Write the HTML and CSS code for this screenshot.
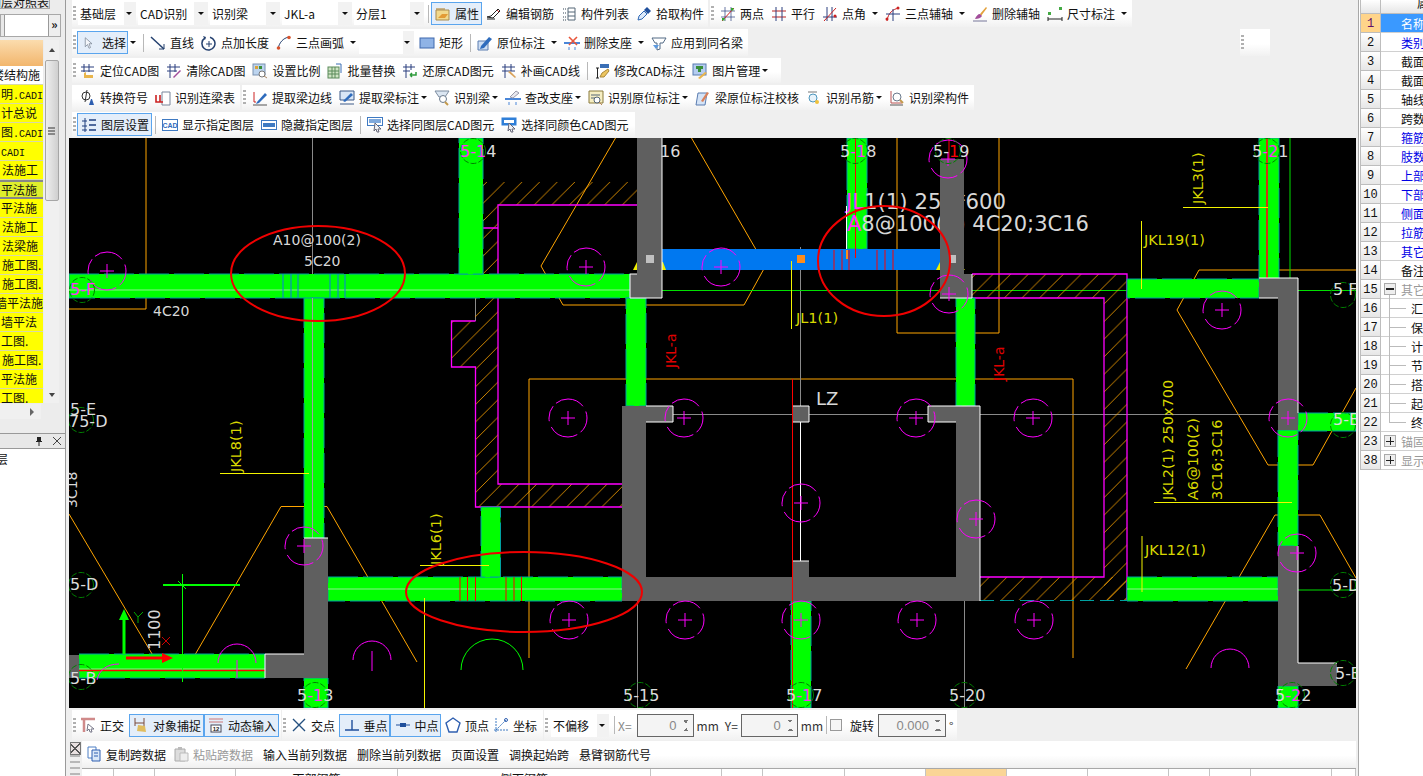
FILE: index.html
```html
<!DOCTYPE html>
<html lang="zh-CN">
<head>
    <meta charset="UTF-8">
    <title>CAD识别 - 识别梁</title>
    <link rel="stylesheet" href="styles.css">
</head>
<body>
<div class="app">

    <!-- 左侧 图层对照表 -->
    <aside class="left">
        <div class="left-tab">图层对照表</div>
        <div class="left-strip"><span class="strip-btn"></span><span class="strip-more">»</span></div>
        <div class="left-list">
            <div class="list-rows">
                <div class="list-head"></div>
                <div class="li white cut-a">楼结构施</div>
                <div class="li">明<span class="m">.CADI</span></div>
                <div class="li">计总说</div>
                <div class="li">图<span class="m">.CADI</span></div>
                <div class="li cut-b"><span class="m">.CADI</span></div>
                <div class="li in">法施工</div>
                <div class="li sel">平法施</div>
                <div class="li">平法施</div>
                <div class="li in">法施工</div>
                <div class="li in">法梁施</div>
                <div class="li in">施工图.</div>
                <div class="li in">施工图.</div>
                <div class="li cut-c">墙平法施</div>
                <div class="li">墙平法</div>
                <div class="li">工图.</div>
                <div class="li in">施工图.</div>
                <div class="li">平法施</div>
                <div class="li">工图.</div>
            </div>
            <div class="vscroll">
                <span class="sc-up"></span>
                <span class="sc-thumb"><i></i><i></i><i></i></span>
                <span class="sc-down"></span>
            </div>
        </div>
        <div class="hscroll"><span class="sc-right"></span></div>
        <div class="panel-head">
            <svg class="pin" viewBox="0 0 10 10"><path d="M3 1h4v4h1v1H5.500v4h-1V6H2V5h1z" fill="#222"/></svg>
            <svg class="pin" viewBox="0 0 10 10"><path d="M1 1l8 8M9 1l-8 8" stroke="#444" fill="none"/></svg>
        </div>
        <div class="panel-body">层</div>
    </aside>

    <main class="center">
        <!-- 工具栏 -->
        <div class="tools">
            <div class="row">
                <div class="bar w-a">
                    <span class="grip"></span>
                    <span class="combo"><b>基础层</b><i class="arr"></i></span>
                    <span class="combo"><b>CAD识别</b><i class="arr"></i></span>
                    <span class="combo"><b>识别梁</b><i class="arr"></i></span>
                    <span class="combo"><b>JKL-a</b><i class="arr"></i></span>
                    <span class="combo"><b>分层1</b><i class="arr"></i></span>
                    <span class="sep"></span>
                    <span class="tool on prop">
                        <svg class="ic" viewBox="0 0 16 16"><path d="M1 2h9v2H1z" fill="#c9b48a"/><path d="M1 4h13v10H1z" fill="#f2d98c" stroke="#a98b4e"/><path d="M3 12l4-4h6l-3 4z" fill="#e39b35"/></svg>属性
                    </span>
                    <span class="tool">
                        <svg class="ic" viewBox="0 0 16 16"><path d="M1 11l4-1 7-7 2 2-7 7z" fill="#fff" stroke="#222"/><path d="M11 4l2 2" stroke="#c33"/><path d="M1 13h8" stroke="#222"/></svg>编辑钢筋
                    </span>
                    <span class="tool">
                        <svg class="ic" viewBox="0 0 16 16"><path d="M7 2h7v12H7z" fill="#fff" stroke="#567"/><path d="M7 6h7M7 10h7" stroke="#567"/><path d="M2 3h3M2 7h3M2 11h3M2 14h3" stroke="#345" stroke-dasharray="1 1"/></svg>构件列表
                    </span>
                    <span class="tool">
                        <svg class="ic" viewBox="0 0 16 16"><path d="M2 14l1-4 5-5 3 3-5 5z" fill="#dbe9fa" stroke="#2f68b5"/><path d="M8 4l3-3 4 4-3 3z" fill="#1f4f9c"/></svg>拾取构件
                    </span>
                </div>
                <div class="bar w-b">
                    <span class="grip"></span>
                    <span class="tool">
                        <svg class="ic" viewBox="0 0 16 16"><path d="M1 5h14M1 11h14M5 1v14M11 1v14" stroke="#2b3f7e" fill="none" opacity=".7"/><path d="M2 15L14 2" stroke="#c22"/><rect x="2" y="12" width="2.500" height="2.500" fill="#3a3"/><rect x="11" y="2" width="2.500" height="2.500" fill="#3a3"/></svg>两点
                    </span>
                    <span class="tool">
                        <svg class="ic" viewBox="0 0 16 16"><path d="M1 5h14M1 11h14" stroke="#b22" /><path d="M5 1v14M11 1v14" stroke="#2b3f7e"/></svg>平行
                    </span>
                    <span class="tool">
                        <svg class="ic" viewBox="0 0 16 16"><path d="M1 11h14M5 1v14M10 1v14" stroke="#2b3f7e"/><path d="M2 15L14 2" stroke="#c22"/><circle cx="13" cy="10" r="1.500" fill="#c22"/></svg>点角<i class="arr"></i>
                    </span>
                    <span class="tool">
                        <svg class="ic" viewBox="0 0 16 16"><path d="M2 15C3 7 8 3 14 2" stroke="#c22" fill="none"/><path d="M1 8h14M8 3v12" stroke="#2b3f7e"/><circle cx="2" cy="13" r="1.500" fill="#c22"/><circle cx="13" cy="2" r="1.500" fill="#c22"/></svg>三点辅轴<i class="arr"></i>
                    </span>
                    <span class="tool">
                        <svg class="ic" viewBox="0 0 16 16"><path d="M8 8l6-7 1 1-6 8z" fill="#e3a13c"/><path d="M3 13c1-3 3-5 5-5l2 2c-1 2-4 3-7 3z" fill="#a24d9a"/><path d="M1 15h14" stroke="#779"/></svg>删除辅轴
                    </span>
                    <span class="tool">
                        <svg class="ic" viewBox="0 0 16 16"><rect x="1" y="6" width="3" height="3" fill="#4a4"/><rect x="12" y="1" width="3" height="3" fill="#4a4"/><path d="M1 11v4M15 11v4M1 13h14" stroke="#222"/></svg>尺寸标注<i class="arr"></i>
                    </span>
                </div>
            </div>

            <div class="row">
                <div class="bar w-c">
                    <span class="grip"></span>
                    <span class="tool on pick">
                        <svg class="ic sm" viewBox="0 0 16 16"><path d="M3 1l9 8H8l2 5-2 1-2-5-3 3z" fill="#f4f7fb" stroke="#7a8494"/></svg>选择
                    </span>
                    <i class="arr out"></i>
                    <span class="sep"></span>
                    <span class="tool">
                        <svg class="ic" viewBox="0 0 16 16"><path d="M1 2l13 12" stroke="#24406f" stroke-width="1.500"/><path d="M14 9v5H9" stroke="#24406f" fill="none"/></svg>直线
                    </span>
                    <span class="tool">
                        <svg class="ic" viewBox="0 0 16 16"><path d="M4 3a6.500 6.500 0 1 0 5-.8" stroke="#24406f" stroke-width="1.500" fill="none"/><path d="M2 1l3 1-1 3z" fill="#24406f"/><path d="M5 9h6M8 6v6" stroke="#24406f"/></svg>点加长度
                    </span>
                    <span class="tool">
                        <svg class="ic" viewBox="0 0 16 16"><path d="M2 14C3 8 7 3 13 2" stroke="#24406f" fill="none"/><circle cx="2.500" cy="13" r="1.800" fill="#d9532c"/><circle cx="13" cy="2.500" r="1.800" fill="#d9532c"/></svg>三点画弧<i class="arr"></i>
                    </span>
                    <span class="combo narrow"><b></b><i class="arr"></i></span>
                    <span class="tool rect-tool">
                        <svg class="ic" viewBox="0 0 16 16"><rect x="1" y="3" width="14" height="10" fill="#8fb3e6" stroke="#3f68ad"/></svg>矩形
                    </span>
                    <span class="sep"></span>
                    <span class="tool">
                        <svg class="ic" viewBox="0 0 16 16"><path d="M1 6h10v9H1z" fill="#cfdff4" stroke="#5a7cb0"/><path d="M4 11l8-9 3 2-8 9-4 1z" fill="#2f6cbd"/></svg>原位标注<i class="arr"></i>
                    </span>
                    <span class="tool">
                        <svg class="ic" viewBox="0 0 16 16"><path d="M0 8h16" stroke="#4a86d8" stroke-width="2"/><path d="M5 12v3M11 12v3" stroke="#4a86d8"/><path d="M5 2l8 8M13 2l-8 8" stroke="#e8553a" stroke-width="1.600"/></svg>删除支座<i class="arr"></i>
                    </span>
                    <span class="tool">
                        <svg class="ic" viewBox="0 0 16 16"><path d="M1 3h14l-3 5H9v6l-3 1V8H4z" fill="#fff" stroke="#536a85"/><path d="M2 10l3 4 3-4z" fill="#5c9ae0"/></svg>应用到同名梁
                    </span>
                </div>
                <div class="bar w-d"><span class="grip"></span></div>
            </div>

            <div class="row">
                <div class="bar w-e">
                    <span class="grip"></span>
                    <span class="tool">
                        <svg class="ic" viewBox="0 0 16 16"><path d="M4 1v8M9 1v8M1 4h13M1 8h13" stroke="#2b3f7e"/><path d="M4 15v-5l2-1v3h7v3z" fill="#e9b54c"/></svg>定位CAD图
                    </span>
                    <span class="tool">
                        <svg class="ic" viewBox="0 0 16 16"><path d="M4 1v14M9 1v8M1 4h13M1 8h10" stroke="#2b3f7e"/><path d="M7 14l7-7 1 1-7 7z" fill="#a24d9a"/></svg>清除CAD图
                    </span>
                    <span class="tool">
                        <svg class="ic" viewBox="0 0 16 16"><rect x="1" y="1" width="12" height="11" fill="#bcd4ef" stroke="#7a92b0"/><rect x="3" y="3" width="3" height="3" fill="#d9a33c"/><rect x="7" y="3" width="3" height="3" fill="#3a8f3a"/><circle cx="10" cy="11" r="3" fill="#fff" stroke="#777"/><path d="M12 13l3 2" stroke="#a86"/></svg>设置比例
                    </span>
                    <span class="tool">
                        <svg class="ic" viewBox="0 0 16 16"><rect x="1" y="4" width="11" height="11" fill="#cfe4c4" stroke="#5a8a5a"/><path d="M1 8h11M1 11h11M5 4v11M8 4v11" stroke="#5a8a5a"/><path d="M9 1h5v9" stroke="#3a6fb5" fill="none"/></svg>批量替换
                    </span>
                    <span class="tool">
                        <svg class="ic" viewBox="0 0 16 16"><path d="M4 1v14M9 1v6M1 4h12M1 8h7" stroke="#2b3f7e"/><path d="M8 12h6v-3M8 12l2-2M8 12l2 2" stroke="#2d9a3a" stroke-width="1.500" fill="none"/></svg>还原CAD图元
                    </span>
                    <span class="tool">
                        <svg class="ic" viewBox="0 0 16 16"><path d="M4 1v14M10 1v7M1 4h13M1 8h13" stroke="#2b3f7e"/><path d="M7 9l2-1 6 6-1 1z" fill="#d9a35c"/></svg>补画CAD线
                    </span>
                    <span class="sep"></span>
                    <span class="tool">
                        <svg class="ic" viewBox="0 0 16 16"><path d="M2 5h3M2 15h3M3.500 5v10" stroke="#222"/><path d="M6 14l2-4 6-4 1 2-5 6z" fill="#ecc55f" stroke="#a8863a"/><path d="M6 1h9v4H6z" fill="#3a6fb5"/></svg>修改CAD标注
                    </span>
                    <span class="tool">
                        <svg class="ic" viewBox="0 0 16 16"><rect x="1" y="1" width="13" height="11" fill="#b5cdf0" stroke="#5a7cb0"/><path d="M4 3h7v3H9v3H6V6H4z" fill="#3a8f3a"/><path d="M6 15l7-6 2 1-7 6z" fill="#e9b54c"/></svg>图片管理<i class="arr tight"></i>
                    </span>
                </div>
            </div>

            <div class="row">
                <div class="bar w-f">
                    <span class="tool first">
                        <svg class="ic" viewBox="0 0 16 16"><circle cx="6" cy="6" r="4" fill="none" stroke="#333"/><path d="M7 0L5 12" stroke="#333"/><path d="M9 15l2-6h1l2 6z" fill="#2f5fb0"/></svg>转换符号
                    </span>
                    <span class="tool">
                        <svg class="ic" viewBox="0 0 16 16"><path d="M7 2h8v13H7z" fill="#fff" stroke="#78859a"/><path d="M1 5v7h4M5 5v7h3" stroke="#c22" stroke-width="1.600" fill="none"/></svg>识别连梁表
                    </span>
                </div>
                <div class="bar w-g">
                    <span class="grip"></span>
                    <span class="tool">
                        <svg class="ic" viewBox="0 0 16 16"><path d="M1 15h14" stroke="#555"/><path d="M2 2v10h2" stroke="#c22" fill="none"/><path d="M5 12l8-9 2 2-8 8-3 1z" fill="#2f6cbd"/></svg>提取梁边线
                    </span>
                    <span class="tool">
                        <svg class="ic" viewBox="0 0 16 16"><path d="M1 1h14v9H1z" fill="#d8e6f7" stroke="#3c5a88"/><path d="M1 14h14" stroke="#3c5a88"/><path d="M4 11l8-8 2 2-8 7z" fill="#2f6cbd"/></svg>提取梁标注<i class="arr tight"></i>
                    </span>
                    <span class="tool">
                        <svg class="ic" viewBox="0 0 16 16"><path d="M1 1h14l-4 6H5z" fill="#dbe6f2" stroke="#7d8ca0"/><circle cx="9" cy="9" r="3.500" fill="#fff" stroke="#6a7a8d"/><path d="M11 12l3 3" stroke="#c49a4c" stroke-width="2"/></svg>识别梁<i class="arr tight"></i>
                    </span>
                    <span class="tool">
                        <svg class="ic" viewBox="0 0 16 16"><path d="M0 9h16" stroke="#4a86d8" stroke-width="2"/><path d="M4 12v3M11 12v3" stroke="#4a86d8"/><path d="M5 7l6-6 3 2-6 5z" fill="#e8e8ee" stroke="#99a"/></svg>查改支座<i class="arr tight"></i>
                    </span>
                    <span class="tool">
                        <svg class="ic" viewBox="0 0 16 16"><path d="M1 1h14v12H1z" fill="#f6eec2" stroke="#8a7a3c"/><path d="M3 5h9M3 8h5" stroke="#567"/><circle cx="9" cy="10" r="3" fill="#fff" stroke="#567"/><path d="M11 12l3 3" stroke="#b85"/></svg>识别原位标注<i class="arr tight"></i>
                    </span>
                    <span class="tool">
                        <svg class="ic" viewBox="0 0 16 16"><path d="M3 3h9l-2 12H1z" fill="#d5e4f7" stroke="#5a7cb0"/><path d="M6 11l6-9 2 1-6 9z" fill="#d9825c"/></svg>梁原位标注校核
                    </span>
                    <span class="tool tight-ic">
                        <svg class="ic" viewBox="0 0 16 16"><path d="M2 2h9" stroke="#777"/><circle cx="7" cy="8" r="4" fill="#e8f3fb" stroke="#4e97bd"/><circle cx="11" cy="12" r="2" fill="#f0c23c"/></svg>识别吊筋<i class="arr tight"></i>
                    </span>
                    <span class="tool">
                        <svg class="ic" viewBox="0 0 16 16"><path d="M2 1v12h11" stroke="#b55" fill="none"/><circle cx="8" cy="7" r="4" fill="#fff" stroke="#6a7a8d"/><path d="M11 10l3 3" stroke="#c49a4c" stroke-width="2"/><path d="M1 15h13" stroke="#555"/></svg>识别梁构件
                    </span>
                </div>
            </div>

            <div class="row">
                <div class="bar w-h">
                    <span class="grip"></span>
                    <span class="tool on layer">
                        <svg class="ic" viewBox="0 0 16 16"><path d="M4 1v14M1 4h5M1 9h5M1 13h5" stroke="#1f3f7f"/><path d="M8 3h7M8 8h7M8 13h7" stroke="#1f3f7f" stroke-width="1.400"/></svg>图层设置
                    </span>
                    <span class="sep"></span>
                    <span class="tool">
                        <svg class="ic" viewBox="0 0 16 16"><rect x=".5" y="2.500" width="15" height="11" fill="#fff" stroke="#3f7ac2"/><text x="8" y="11" class="ic-t">CAD</text></svg>显示指定图层
                    </span>
                    <span class="tool">
                        <svg class="ic" viewBox="0 0 16 16"><rect x=".5" y="3.500" width="15" height="9" fill="#fff" stroke="#3f7ac2"/><rect x="2" y="6" width="12" height="4" fill="#3f7ac2"/></svg>隐藏指定图层
                    </span>
                    <span class="sep"></span>
                    <span class="tool">
                        <svg class="ic" viewBox="0 0 16 16"><rect x=".5" y=".5" width="15" height="8" fill="#fff" stroke="#3f7ac2"/><rect x="2" y="2" width="12" height="4" fill="#7fa9dc"/><path d="M8 6l6 6h-3l1 3h-2l-1-3-2 2z" fill="#eef1f6" stroke="#667"/></svg>选择同图层CAD图元
                    </span>
                    <span class="tool">
                        <svg class="ic" viewBox="0 0 16 16"><rect x=".5" y=".5" width="15" height="8" fill="#2f7fd8"/><rect x="3" y="3" width="10" height="3" fill="#fff"/><path d="M8 6l6 6h-3l1 3h-2l-1-3-2 2z" fill="#eef1f6" stroke="#667"/></svg>选择同颜色CAD图元
                    </span>
                </div>
            </div>
        </div>

        <!-- 绘图区，坐标与屏幕一致 -->
        <svg class="canvas" viewBox="69 138 1287 570">
            <defs>
                <pattern id="hatch" width="17.600" height="17.600" patternUnits="userSpaceOnUse">
                    <path d="M0 17.600L17.600 0" stroke="#ffa500" stroke-width=".8" fill="none"/>
                </pattern>
                <g id="pile">
                    <circle r="19" fill="none" stroke="#f0f" stroke-dasharray="16 4 30 6"/>
                    <path d="M-7 0H7M0-7V7" stroke="#f0f" fill="none"/>
                </g>
                <circle id="ax" r="12.500" fill="none" stroke="#008000" stroke-dasharray="6 2"/>
            </defs>

            <!-- 细线 -->
            <g class="ln-orange">
                <path d="M69 309H146V138"/>
                <path d="M897 138V333H999V138"/>
                <path d="M529 658V379H1073V658"/>
                <path d="M615.500 138L541 266 563 305H744L765.500 266 691.500 138"/>
                <path d="M1356 270H1199L1177 310 1268 465H1313L1356 388"/>
                <path d="M1186 669L1275 515H1320L1356 578"/>
                <path d="M192 660L281 506.500H327L417 662"/>
                <path d="M69 514L161 669"/>
            </g>
            <g class="ln-gray">
                <path d="M312.500 138V304M475.500 138V321M800.500 247V406M646 414.500H1356M637.500 601V708M964.500 601V708"/>
            </g>
            <g class="ln-green">
                <path d="M662 290.500H1356M1290 138V278M1298 590H1356"/>
            </g>

            <!-- 斜线填充 -->
            <rect x="483" y="182" width="154" height="23" fill="url(#hatch)"/>
            <rect x="475" y="205" width="23" height="302" fill="url(#hatch)"/>
            <rect x="451" y="321" width="24" height="46" fill="url(#hatch)"/>
            <rect x="498" y="484" width="124" height="23" fill="url(#hatch)"/>
            <rect x="972" y="274" width="155" height="24" fill="url(#hatch)"/>
            <rect x="1104" y="298" width="23" height="302" fill="url(#hatch)"/>
            <rect x="980" y="577" width="147" height="23" fill="url(#hatch)"/>
            <g class="ln-mag">
                <path d="M637 205H498V484H622M475 228H498M475.500 321H451.500V367H475.500V507H622"/>
                <path d="M972 274H1127V600M972 298H1104V577H980"/>
            </g>
            <path d="M980 600.500H1127" stroke="#00a0a0" stroke-dasharray="14 6" fill="none"/>

            <!-- 梁 -->
            <g class="beam">
                <rect x="69" y="274" width="561" height="24"/>
                <rect x="304" y="298" width="20" height="240"/>
                <rect x="459" y="138" width="24" height="136"/>
                <rect x="626" y="298" width="20" height="108"/>
                <rect x="847" y="138" width="20" height="111"/>
                <rect x="956" y="298" width="19" height="108"/>
                <rect x="328" y="577" width="294" height="24"/>
                <rect x="481" y="507" width="19.500" height="70"/>
                <rect x="79" y="654" width="186" height="24"/>
                <rect x="304" y="678" width="24" height="30"/>
                <rect x="791" y="601" width="20" height="107"/>
                <rect x="1127" y="577" width="151" height="24"/>
                <rect x="1259" y="138" width="20" height="141"/>
                <rect x="1127" y="279" width="132" height="19"/>
                <rect x="1278" y="430" width="20" height="116"/>
                <rect x="1298" y="413" width="58" height="18"/>
                <rect x="1278" y="686" width="20" height="22"/>
            </g>
            <rect x="662" y="249" width="278" height="21" fill="#0078f0"/>
            <g fill="#ee0">
                <path d="M633 270l4-8 3 8zM660 262l3 0 3 8h-6zM936 270l4-8v8zM958 262l7 8h-7z"/>
            </g>
            <path d="M69 290H630M79 669H265M328 589H622M1127 589H1278" stroke="#90ee90" stroke-width="1" fill="none"/>
            <path d="M79 670.500H265" stroke="#f00" stroke-width="1.500" fill="none"/>

            <!-- 箍筋 -->
            <path d="M283 274v24M291 274v24M298 274v24M330 274v24M338 274v24M345 274v24" stroke="#0a7ae6" fill="none"/>
            <path d="M460 577v24M467.500 577v24M475.500 577v24M506 577v24M514 577v24M521.500 577v24" stroke="#f00" fill="none"/>
            <path d="M834 250v20M842 250v20M849 250v20M877 250v20M885 250v20M893 250v20" stroke="#f00" fill="none"/>
            <rect x="846" y="250" width="2" height="9" fill="#ff8c1a"/>
            <rect x="797" y="255" width="8" height="8" fill="#ff8c1a"/>
            <path d="M312.500 298V538M1267 138V278" stroke="#a0a0a0" fill="none"/>
            <path d="M1267 138V278" stroke="#f00" stroke-width="1.500" fill="none"/>
            <path d="M855.500 138V258" stroke="#f00" fill="none"/>

            <!-- 大字标注，被柱子压住 -->
            <text class="t-big" x="846" y="209" textLength="160" lengthAdjust="spacingAndGlyphs"><tspan class="on-g">JL</tspan>1(1) 250*600</text>
            <text class="t-big2" x="847" y="231" textLength="242" lengthAdjust="spacingAndGlyphs"><tspan class="on-g">A</tspan>8@100(2) 4C20;3C16</text>

            <!-- 柱 -->
            <g class="wall">
                <path d="M637 138H662V298H630V274H637Z"/>
                <path d="M940 159H964V274H972V298H940Z"/>
                <path d="M622 406H673V422H646V577H956V422H928V406H980V601H622Z"/>
                <rect x="792.500" y="406" width="16.500" height="16"/>
                <rect x="793" y="561" width="16" height="16"/>
                <path d="M304 538H328V678H265V654H304Z"/>
                <rect x="69" y="655" width="10" height="23"/>
                <path d="M1259 278H1298V430H1278V298H1259Z"/>
                <path d="M1278 546H1298V663H1337V686H1278Z"/>
            </g>
            <g class="ln-white">
                <path d="M662 138V298H630V274H637M972 274V298H940M646 406H673V422H646M928 422H956M928 422V406H980V601"/>
                <path d="M792 406H809V422H792M793 561H809"/>
                <path d="M304 538H328M265 654H304M265 654V678"/>
                <path d="M1259 298H1278M1259 278H1298V413M1298 546V663H1337M846.500 206V249"/>
                <path d="M800.500 422V561" stroke="#bbb"/>
            </g>
            <rect x="646" y="255" width="8" height="8" fill="#c0c0c0"/>
            <rect x="950" y="255" width="6" height="8" fill="#c0c0c0"/>
            <path d="M949 138V159" stroke="#f00" fill="none"/>
            <path d="M792.500 379V708" stroke="#f00" fill="none"/>

            <!-- 黄色引线 -->
            <g class="ln-yellow">
                <path d="M424.500 598V708M420 565.500H489M220 473.500H309M791.500 261V329M1141.500 221V289M1183 207.500H1268M1142 536V592M1154 502.500H1292"/>
            </g>

            <!-- 桩 -->
            <use href="#pile" x="107" y="271"/>
            <use href="#pile" x="586" y="267"/>
            <use href="#pile" x="721" y="267"/>
            <use href="#pile" x="949" y="294"/>
            <use href="#pile" x="948" y="159"/>
            <use href="#pile" x="1222" y="310"/>
            <use href="#pile" x="568" y="418"/>
            <use href="#pile" x="684" y="418"/>
            <use href="#pile" x="916" y="418"/>
            <use href="#pile" x="1033" y="418"/>
            <use href="#pile" x="1288" y="418"/>
            <use href="#pile" x="801" y="503"/>
            <use href="#pile" x="976" y="519"/>
            <use href="#pile" x="1297" y="553"/>
            <use href="#pile" x="304" y="546"/>
            <use href="#pile" x="569" y="620"/>
            <use href="#pile" x="685" y="620"/>
            <use href="#pile" x="801" y="620"/>
            <use href="#pile" x="917" y="620"/>
            <use href="#pile" x="1034" y="620"/>
            <path d="M218 663a19 19 0 0 1 38 0M237 660v18M353 660a19 19 0 0 1 38 0M372 651v20M1211 668a19 19 0 0 1 38 0M97 680c2-10 10-16 22-16" stroke="#f0f" fill="none"/>
            <path d="M461 670a31 31 0 0 1 62 0" stroke="#0f0" fill="none"/>

            <!-- 轴号圈 -->
            <use href="#ax" x="473" y="151"/>
            <use href="#ax" x="855" y="151"/>
            <use href="#ax" x="948" y="151"/>
            <use href="#ax" x="1267" y="151"/>
            <use href="#ax" x="1343" y="295"/>
            <use href="#ax" x="1343" y="425"/>
            <use href="#ax" x="1343" y="585"/>
            <use href="#ax" x="1343" y="673"/>
            <use href="#ax" x="640" y="695"/>
            <use href="#ax" x="801" y="695"/>
            <use href="#ax" x="964" y="695"/>
            <use href="#ax" x="1292" y="695"/>
            <use href="#ax" x="315" y="695"/>
            <use href="#ax" x="81" y="585"/>
            <use href="#ax" x="81" y="677"/>
            <use href="#ax" x="81" y="420"/>
            <use href="#ax" x="82" y="290"/>

            <!-- 文字 -->
            <g class="t-axis">
                <text x="460" y="157"><tspan class="on-g">5-1</tspan>4</text>
                <text x="660" y="157">16</text>
                <text x="840" y="157">5<tspan class="on-g">-1</tspan>8</text>
                <text x="933" y="157">5-<tspan class="on-r">1</tspan>9</text>
                <text x="1252" y="157">5<tspan class="on-g">-2</tspan>1</text>
                <text x="297" y="701">5<tspan class="on-g">-1</tspan>3</text>
                <text x="623" y="701">5-15</text>
                <text x="786" y="701">5<tspan class="on-g">-1</tspan>7</text>
                <text x="949" y="701">5-20</text>
                <text x="1275" y="701">5<tspan class="on-g">-2</tspan>2</text>
                <text x="1333" y="295">5 F</text>
                <text x="1333" y="425">5-E</text>
                <text x="1332" y="591">5-D</text>
                <text x="1335" y="679">5-B</text>
                <text x="70" y="295" class="on-g">5-F</text>
                <text x="70" y="590">5-D</text>
                <text x="70" y="684">5-B</text>
                <text x="70" y="415">5-E</text>
                <text x="69" y="427">75-D</text>
            </g>
            <g class="t-white">
                <text x="273" y="245">A10@100(2)</text>
                <text x="304" y="266">5C20</text>
                <text x="153" y="316">4C20</text>
                <text x="816" y="405" class="t-lz">LZ</text>
                <text transform="translate(77 508) rotate(-90)">3C18</text>
                <text transform="translate(160 650) rotate(-90)" class="t-1100">1100</text>
            </g>
            <g class="t-yellow">
                <text transform="translate(241 472) rotate(-90)">JKL8(1)</text>
                <text transform="translate(441 565) rotate(-90)">JKL6(1)</text>
                <text transform="translate(1203 204) rotate(-90)">JKL3(1)</text>
                <text transform="translate(1173 500) rotate(-90)">JKL2(1) 250x700</text>
                <text transform="translate(1198 500) rotate(-90)">A6@100(2)</text>
                <text transform="translate(1222 500) rotate(-90)">3C16;3C16</text>
                <text x="1144" y="245">JKL19(1)</text>
                <text x="1145" y="555">JKL12(1)</text>
                <text x="796" y="323">JL1(1)</text>
            </g>
            <g class="t-red">
                <text transform="translate(676 368) rotate(-90)">JKL-a</text>
                <text transform="translate(1004 381) rotate(-90)">JKL-a</text>
            </g>

            <!-- 坐标轴 -->
            <path d="M124 654V616" stroke="#0f0" stroke-width="3" fill="none"/>
            <path d="M124 609l-5 11h10z" fill="#0f0"/>
            <path d="M126 658H163" stroke="#f00" stroke-width="3" fill="none"/>
            <path d="M173 658l-11-5v10z" fill="#f00"/>
            <path d="M134 612l4 5 5-5M138 617v6" stroke="#0a0" fill="none"/>
            <path d="M162 637l8 8M170 637l-8 8" stroke="#c00" fill="none"/>
            <path d="M163 585H240" stroke="#0f0" stroke-width="2" fill="none"/>
            <path d="M182.500 574V682M178 581l8 8" stroke="#0f0" fill="none"/>

            <!-- 红圈 -->
            <g class="ring">
                <ellipse cx="318" cy="273.500" rx="87" ry="47.500"/>
                <ellipse cx="884" cy="261" rx="66" ry="55"/>
                <ellipse cx="524" cy="592" rx="118" ry="40"/>
            </g>
        </svg>

        <!-- 状态栏 -->
        <div class="status">
            <div class="bar s-a">
                <span class="grip"></span>
                <span class="tool">
                    <svg class="ic" viewBox="0 0 16 16"><path d="M1 2h14M4 2v13" stroke="#d08a8a" stroke-width="2.500"/><path d="M8 7l6 5h-3l1 3-2 0-1-3-2 2z" fill="#fff" stroke="#778"/></svg>正交
                </span>
                <span class="tool on snap">
                    <svg class="ic" viewBox="0 0 16 16"><path d="M2 1v8M11 1v8" stroke="#7a4a3a"/><path d="M2 6h9" stroke="#7a4a3a"/><path d="M4 14l1-6 7 1 1 6z" fill="#e0bd5f"/></svg>对象捕捉
                </span>
                <span class="tool on snap">
                    <svg class="ic" viewBox="0 0 16 16"><path d="M1 2h14M1 5h14" stroke="#c77"/><rect x="3" y="8" width="10" height="7" fill="#fff" stroke="#445"/><text x="8" y="14" class="ic-t dark">12</text></svg>动态输入
                </span>
            </div>
            <div class="bar s-b">
                <span class="grip"></span>
                <span class="tool">
                    <svg class="ic" viewBox="0 0 16 16"><path d="M2 2l12 12M14 2L2 14" stroke="#24507f" stroke-width="1.400"/></svg>交点
                </span>
                <span class="tool on foot">
                    <svg class="ic" viewBox="0 0 16 16"><path d="M1 13h14M8 3v10" stroke="#1f4f9c" stroke-width="1.400"/></svg>垂点
                </span>
                <span class="tool on foot">
                    <svg class="ic" viewBox="0 0 16 16"><path d="M1 8h14" stroke="#1f4f9c"/><rect x="5" y="6" width="6" height="4" fill="#1f4f9c"/></svg>中点
                </span>
                <span class="tool">
                    <svg class="ic" viewBox="0 0 16 16"><path d="M8 1l7 5-3 9H4L1 6z" fill="#fff" stroke="#2f5fb0" stroke-width="1.400"/></svg>顶点
                </span>
                <span class="tool">
                    <svg class="ic" viewBox="0 0 16 16"><path d="M3 1v14M1 13h14M3 13L13 3" stroke="#3f7ac2" stroke-dasharray="2 1"/><circle cx="13" cy="3" r="1.500" fill="none" stroke="#2f5fb0"/></svg>坐标
                </span>
            </div>
            <div class="bar s-c">
                <span class="grip"></span>
                <span class="combo offset"><b>不偏移</b><i class="arr"></i></span>
                <span class="sep"></span>
                <span class="fld muted">X=</span>
                <span class="spin"><b>0</b><i></i></span>
                <span class="fld">mm</span>
                <span class="fld y-lab">Y=</span>
                <span class="spin"><b>0</b><i></i></span>
                <span class="fld">mm</span>
                <span class="sep"></span>
                <span class="check"></span>
                <span class="rot">旋转</span>
                <span class="spin wide"><b>0.000</b><i></i></span>
                <span class="fld">°</span>
            </div>
        </div>

        <!-- 梁平法表格 -->
        <div class="lower">
            <div class="lower-side">
                <span class="lower-close"></span>
                <span class="lower-grip"></span>
            </div>
            <div class="lower-main">
                <div class="bar lower-bar">
                    <span class="tool">
                        <svg class="ic" viewBox="0 0 16 16"><path d="M2 1h8v11H2z" fill="#fff" stroke="#4d7fc4"/><path d="M6 4h8v11H6z" fill="#dbe8f8" stroke="#2f5fb0"/><path d="M8 7h4M8 10h4" stroke="#2f5fb0"/></svg>复制跨数据
                    </span>
                    <span class="tool off">
                        <svg class="ic" viewBox="0 0 16 16"><path d="M2 3h10v12H2z" fill="#ddd" stroke="#aaa"/><path d="M5 1h4v3H5z" fill="#bbb"/><path d="M7 7h8v8H7z" fill="#eee" stroke="#bbb"/></svg>粘贴跨数据
                    </span>
                    <span class="tool txt">输入当前列数据</span>
                    <span class="tool txt">删除当前列数据</span>
                    <span class="tool txt">页面设置</span>
                    <span class="tool txt">调换起始跨</span>
                    <span class="tool txt">悬臂钢筋代号</span>
                </div>
                <div class="grid-head">
                    <span></span><span></span><span></span>
                    <span class="up">下部钢筋</span>
                    <span class="up">侧面钢筋</span>
                    <span></span><span></span><span></span><span></span>
                    <span class="hot"></span>
                    <span></span><span></span><span></span><span></span><span></span><span></span>
                </div>
            </div>
        </div>
    </main>

    <!-- 右侧 属性表 -->
    <aside class="right">
        <div class="p-head"><span class="num"></span><span class="val head">属性名称</span></div>
        <div class="p-row cur"><span class="num">1</span><span class="val">名称</span></div>
        <div class="p-row"><span class="num">2</span><span class="val blue">类别</span></div>
        <div class="p-row"><span class="num">3</span><span class="val">截面宽度</span></div>
        <div class="p-row"><span class="num">4</span><span class="val">截面高度</span></div>
        <div class="p-row"><span class="num">5</span><span class="val">轴线距离</span></div>
        <div class="p-row"><span class="num">6</span><span class="val">跨数量</span></div>
        <div class="p-row"><span class="num">7</span><span class="val blue">箍筋</span></div>
        <div class="p-row"><span class="num">8</span><span class="val blue">肢数</span></div>
        <div class="p-row"><span class="num">9</span><span class="val blue">上部通长</span></div>
        <div class="p-row"><span class="num">10</span><span class="val blue">下部通长</span></div>
        <div class="p-row"><span class="num">11</span><span class="val blue">侧面构造</span></div>
        <div class="p-row"><span class="num">12</span><span class="val blue">拉筋</span></div>
        <div class="p-row"><span class="num">13</span><span class="val blue">其它箍筋</span></div>
        <div class="p-row"><span class="num">14</span><span class="val">备注</span></div>
        <div class="p-row"><span class="num">15</span><span class="val gray"><i class="fold minus"></i>其它属性</span></div>
        <div class="p-row tree"><span class="num">16</span><span class="val sub">汇总信息</span></div>
        <div class="p-row tree"><span class="num">17</span><span class="val sub">保护层</span></div>
        <div class="p-row tree"><span class="num">18</span><span class="val sub">计算设置</span></div>
        <div class="p-row tree"><span class="num">19</span><span class="val sub">节点设置</span></div>
        <div class="p-row tree"><span class="num">20</span><span class="val sub">搭接设置</span></div>
        <div class="p-row tree"><span class="num">21</span><span class="val sub">起点顶标高</span></div>
        <div class="p-row tree end"><span class="num">22</span><span class="val sub">终点顶标高</span></div>
        <div class="p-row"><span class="num">23</span><span class="val gray"><i class="fold plus"></i>锚固搭接</span></div>
        <div class="p-row"><span class="num">38</span><span class="val gray"><i class="fold plus"></i>显示样式</span></div>
    </aside>
</div>
</body>
</html>
```

FILE: styles.css
```css
* {
    box-sizing: border-box;
}
html, body {
    margin: 0;
    height: 100%;
    overflow: hidden;
}
body {
    font-family: "Noto Sans CJK SC", "Liberation Sans", sans-serif;
    font-size: 12px;
    color: #111;
    background: #fff;
}
.app {
    display: flex;
    width: 1423px;
    height: 776px;
    overflow: hidden;
}

/* 左侧 */
.left {
    width: 66px;
    flex: none;
    display: flex;
    flex-direction: column;
    background: #ececec;
    border-right: 1px solid #9a9a9a;
    overflow: hidden;
}
.left-tab {
    height: 9px;
    width: 62px;
    margin-left: -12px;
    line-height: 4px;
    font-size: 12px;
    white-space: nowrap;
    overflow: hidden;
    background: #e6e6e6;
    border: 1px solid #aaa;
    border-top: none;
}
.left-strip {
    height: 23px;
    width: 61px;
    margin-top: 5px;
    display: flex;
    justify-content: space-between;
    background: #fff;
    border: 1px solid #a8a8a8;
}
.strip-btn {
    width: 4px;
    background: #e8e8e8;
    border-right: 1px solid #999;
}
.strip-more {
    width: 12px;
    text-align: center;
    font-weight: bold;
    line-height: 17px;
    background: #eee;
    border-left: 1px solid #999;
}
.left-list {
    height: 363px;
    width: 61px;
    margin-top: 3px;
    display: flex;
}
.list-rows {
    width: 43px;
    flex: none;
    overflow: hidden;
    background: #ffff00;
}
.list-head {
    height: 26px;
    background: linear-gradient(#fbdcae, #f2b66d);
}
.li {
    height: 19px;
    line-height: 18px;
    padding-left: 1px;
    white-space: nowrap;
    border-bottom: 1px solid #d8d8a8;
}
.li .m, .m {
    font-family: "Liberation Mono", monospace;
    font-size: 10px;
}
.li.white {
    background: #fff;
}
.li.in {
    padding-left: 2px;
}
.li.sel {
    background: #dfee2c;
    border-top: 2px solid #888;
    border-bottom: 2px solid #888;
    line-height: 15px;
}
.cut-a {
    margin-left: -9px;
}
.cut-b {
    margin-left: -6px;
}
.cut-c {
    margin-left: -6px;
}
.vscroll {
    width: 15px;
    margin-left: 1px;
    display: flex;
    flex-direction: column;
    align-items: center;
    background: #f0f0f0;
}
.sc-up, .sc-down {
    width: 0;
    height: 0;
    margin: 8px 0;
    border: 3px solid transparent;
}
.sc-up {
    border-bottom: 4px solid #444;
    border-top: none;
}
.sc-down {
    margin-top: auto;
    margin-bottom: 6px;
    border-top: 4px solid #444;
    border-bottom: none;
}
.sc-thumb {
    height: 141px;
    width: 14px;
    display: flex;
    flex-direction: column;
    align-items: center;
    justify-content: center;
    gap: 1px;
    background: linear-gradient(90deg, #eee, #cfcfcf);
    border: 1px solid #a6a6a6;
    border-radius: 2px;
}
.sc-thumb i {
    width: 7px;
    height: 2px;
    background: #888;
}
.hscroll {
    height: 15px;
    width: 41px;
    margin-top: 1px;
    display: flex;
    justify-content: flex-end;
    align-items: center;
    background: #f0f0f0;
}
.sc-right {
    margin-right: 7px;
    border: 4px solid transparent;
    border-left: 4px solid #666;
    border-right: none;
}
.panel-head {
    height: 16px;
    margin-top: 14px;
    display: flex;
    justify-content: flex-end;
    align-items: center;
    gap: 8px;
    padding-right: 3px;
    background: #e8e8e8;
    border-top: 1px solid #999;
    border-bottom: 1px solid #999;
}
.pin {
    width: 10px;
    height: 10px;
}
.panel-body {
    flex: 1;
    margin-left: -4px;
    padding-top: 1px;
    background: #fff;
    line-height: 18px;
    padding-left: 0;
}

/* 中间 */
.center {
    width: 1292px;
    flex: none;
    display: flex;
    flex-direction: column;
    background: #efefef;
    overflow: hidden;
}
.tools {
    height: 138px;
    flex: none;
    display: grid;
    grid-template-rows: 27px 27px 25px 25px 25px;
    row-gap: 2px;
    padding-left: 6px;
}
.row {
    display: flex;
    gap: 2px;
}
.bar {
    display: flex;
    align-items: center;
    gap: 7px;
    height: 100%;
    background: linear-gradient(#fff 55%, #f1f1f1);
}
.grip {
    width: 3px;
    height: 15px;
    margin: 0 -1px 0 1px;
    flex: none;
    background: repeating-linear-gradient(#b0b0b0 0 2px, transparent 2px 4px);
}
.w-a {
    width: 636px;
}
.w-a .grip {
    margin-right: -5px;
}
.w-a .combo + .combo {
    margin-left: -5px;
}
.w-a .grip + .combo {
    width: 58px;
}
.w-a .combo + .sep {
    margin-left: -3px;
}
.w-b {
    width: 422px;
}
.w-c {
    width: 676px;
}
.w-c .grip, .w-h .grip {
    margin-right: -6px;
}
.w-d {
    width: 30px;
    margin-left: 490px;
}
.w-e {
    width: 709px;
}
.w-e .grip {
    margin-right: -3px;
}
.w-f {
    width: 168px;
}
.w-g {
    width: 732px;
}
.w-h {
    width: 563px;
}
.tool {
    display: inline-flex;
    align-items: center;
    gap: 4px;
    white-space: nowrap;
    flex: none;
}
.tool.on {
    height: 23px;
    background: #e4eefa;
    border: 1px solid #5aa5ee;
}
.tool.prop {
    width: 51px;
    padding-left: 3px;
    margin: 0 -3px 0 -5px;
}
.tool.pick {
    width: 51px;
    padding-left: 5px;
    gap: 7px;
    margin-right: -4px;
}
.tool.layer {
    width: 75px;
    padding-left: 3px;
    margin-right: -4px;
}
.tool.first {
    margin-left: 8px;
}
.rect-tool {
    margin-left: -2px;
}
.sep + .tool:not(.on) {
    margin-left: -1px;
}
.ic {
    width: 16px;
    height: 16px;
    flex: none;
}
.ic.sm {
    width: 12px;
}
.ic-t {
    font: bold 7px "Liberation Sans", sans-serif;
    fill: #2f6cbd;
    text-anchor: middle;
}
.ic-t.dark {
    font-size: 6px;
    fill: #222;
}
.sep {
    width: 1px;
    height: 18px;
    flex: none;
    background: #b8b8b8;
}
.combo {
    display: flex;
    align-items: center;
    justify-content: space-between;
    width: 70px;
    height: 23px;
    padding: 0 4px 0 2px;
    flex: none;
    background: linear-gradient(90deg, #fff 80%, #f2f2f2 80%);
}
.combo b {
    font-weight: normal;
}
.combo.narrow {
    width: 55px;
    margin-left: -4px;
}
.combo.offset {
    width: 58px;
    margin-left: 1px;
}
.arr {
    display: inline-block;
    width: 0;
    height: 0;
    margin-left: 2px;
    flex: none;
    border: 3px solid transparent;
    border-top: 3px solid #111;
    border-bottom: none;
}
.arr.tight {
    margin-left: -2px;
}
.arr.out {
    margin: 0 0 0 -1px;
}

/* 绘图区 */
.canvas {
    display: block;
    flex: none;
    width: 1287px;
    height: 570px;
    margin-left: 3px;
    background: #000;
}
.ln-orange path {
    fill: none;
    stroke: #ffa500;
}
.ln-gray path {
    fill: none;
    stroke: #8a8a8a;
}
.ln-green path {
    fill: none;
    stroke: #00e000;
}
.ln-mag path {
    fill: none;
    stroke: #ff00ff;
    stroke-width: 1.300;
}
.ln-yellow path {
    fill: none;
    stroke: #f4f400;
}
.ln-white path {
    fill: none;
    stroke: #fff;
}
.beam rect {
    fill: #00ff00;
    stroke: #00a0a0;
    stroke-dasharray: 30 5;
}
.wall path, .wall rect {
    fill: #5f5f5f;
}
.ring ellipse {
    fill: none;
    stroke: #f00000;
    stroke-width: 2;
}
.canvas text {
    font-family: "DejaVu Sans", sans-serif;
}
.t-axis text {
    font-size: 16px;
    fill: #dcdcdc;
}
.on-g {
    fill: #ff30ff;
}
.t-axis .on-g {
    fill: #ff30ff;
}
.on-r {
    fill: #f00;
}
.t-big, .t-big2 {
    fill: #d8d8d8;
}
.t-big {
    font-size: 22px;
}
.t-big2 {
    font-size: 20.500px;
}
.t-white text {
    font-size: 14px;
    fill: #d8d8d8;
}
.t-white .t-lz {
    font-size: 18px;
}
.t-white .t-1100 {
    font-size: 16px;
}
.t-yellow text {
    font-size: 14.500px;
    fill: #d8d800;
}
.t-red text {
    font-size: 14px;
    fill: #e00000;
}

/* 状态栏 */
.status {
    height: 33px;
    flex: none;
    display: flex;
    gap: 1px;
    padding: 2px 0 1px 6px;
}
.s-a {
    width: 209px;
    gap: 5px;
}
.s-a .tool.snap {
    margin-right: -5px;
    width: 75px;
    padding-left: 3px;
}
.s-a .tool.snap:first-of-type {
    margin-left: -2px;
}
.s-b {
    width: 261px;
    gap: 4px;
}
.s-b .grip + .tool {
    margin-left: 2px;
}
.s-b .tool.foot {
    width: 51px;
    margin-right: -4px;
    padding-left: 2px;
    justify-content: center;
}
.s-b .tool.foot + .tool:not(.foot) {
    margin-left: 4px;
}
.s-c {
    width: 413px;
    gap: 3px;
    background: linear-gradient(#fff 50%, #f1f1f1);
}
.s-c .combo + .sep {
    margin-left: 2px;
}
.fld {
    color: #333;
    white-space: nowrap;
}
.fld.muted {
    color: #888;
    margin-right: 2px;
}
.y-lab {
    margin-left: 3px;
}
.spin {
    position: relative;
    display: flex;
    align-items: center;
    justify-content: flex-end;
    width: 57px;
    height: 23px;
    padding-right: 16px;
    border: 1px solid #666;
    background: #f4f4f4;
    color: #888;
}
.spin b {
    font-weight: normal;
    font-family: "Liberation Sans", sans-serif;
    font-size: 13px;
}
.spin i {
    position: absolute;
    right: 4px;
    top: 5px;
    width: 6px;
    height: 11px;
    background:
        linear-gradient(45deg, transparent 50%, #777 50%) 0 0 / 3px 3px no-repeat,
        linear-gradient(-45deg, transparent 50%, #777 50%) 3px 0 / 3px 3px no-repeat,
        linear-gradient(135deg, transparent 50%, #777 50%) 0 8px / 3px 3px no-repeat,
        linear-gradient(-135deg, transparent 50%, #777 50%) 3px 8px / 3px 3px no-repeat;
}
.spin.wide {
    width: 68px;
}
.check {
    width: 12px;
    height: 12px;
    flex: none;
    border: 1px solid #999;
    background: #f6f6f6;
}
.rot {
    margin: 0 1px 0 5px;
}

/* 下方表格 */
.lower {
    flex: 1;
    display: flex;
    min-height: 0;
}
.lower-side {
    width: 16px;
    padding: 1px 0 0 4px;
    flex: none;
}
.lower-close {
    display: block;
    width: 11px;
    height: 13px;
    border: 1px solid #777;
    background:
        linear-gradient(45deg, transparent 45%, #555 45% 55%, transparent 55%),
        linear-gradient(-45deg, transparent 45%, #555 45% 55%, transparent 55%),
        #e8e0e0;
}
.lower-grip {
    display: block;
    width: 10px;
    height: 21px;
    background: repeating-linear-gradient(#b8b8b8 0 2px, transparent 2px 6px);
}
.lower-main {
    width: 1274px;
}
.lower-bar {
    height: 26px;
    gap: 10px;
    padding-left: 4px;
}
.lower-bar .tool {
    color: #111;
}
.lower-bar .tool.off {
    color: #999;
    margin-left: -3px;
}
.grid-head {
    display: grid;
    grid-template-columns: 32px 41px 81px 162px 253px 71px 41px 82px 81px 81px 81px 81px 41px 41px 81px 24px;
    height: 20px;
    margin-top: 1px;
    background: #fff;
    border-top: 1px solid #a8a8a8;
}
.grid-head span {
    border-right: 1px solid #c4c4c4;
    text-align: center;
    line-height: 15px;
}
.grid-head .up {
    padding-top: 2px;
}
.grid-head .hot {
    background: #fad596;
}

/* 右侧 */
.right {
    width: 65px;
    flex: none;
    padding-left: 1px;
    background: #fff;
    border-left: 1px solid #a8a8a8;
    overflow: hidden;
}
.p-head {
    display: flex;
    height: 14px;
}
.p-head .num {
    border-top: none;
}
.p-row {
    position: relative;
    display: flex;
    height: 19px;
}
.num {
    width: 21px;
    flex: none;
    text-align: center;
    line-height: 20px;
    font-family: "Liberation Mono", monospace;
    font-size: 12px;
    background: linear-gradient(#fff, #e6e6e6);
    border-right: 1px solid #bdbdbd;
    border-bottom: 1px solid #bdbdbd;
    border-left: 1px solid #bdbdbd;
}
.val {
    flex: 1;
    display: block;
    padding-left: 20px;
    white-space: nowrap;
    overflow: hidden;
    line-height: 20px;
    border-bottom: 1px solid #d0d0d0;
}
.val.head {
    padding-left: 36px;
    line-height: 5px;
    background: linear-gradient(#fff, #e6e6e6);
    border-bottom: 1px solid #bdbdbd;
}
.val.blue {
    color: #0000e6;
}
.val.gray {
    color: #999;
}
.val.sub {
    padding-left: 30px;
}
.cur .num {
    background: #ffd48a;
    color: #60106a;
}
.cur .val {
    background: #3a99ff;
    color: #fff;
}
.fold {
    position: absolute;
    left: 24px;
    top: 3px;
    width: 12px;
    height: 12px;
    border: 1px solid #aaa;
    background:
        linear-gradient(#222, #222) center / 8px 2px no-repeat,
        #eee;
}
.fold.plus {
    background:
        linear-gradient(#222, #222) center / 8px 1px no-repeat,
        linear-gradient(#222, #222) center / 1px 8px no-repeat,
        #eee;
}
.tree::before {
    content: "";
    position: absolute;
    left: 29px;
    top: -4px;
    height: 23px;
    border-left: 1px solid #bbb;
}
.tree.end::before {
    height: 14px;
}
.tree::after {
    content: "";
    position: absolute;
    left: 30px;
    top: 9px;
    width: 16px;
    border-top: 1px solid #bbb;
}
```
